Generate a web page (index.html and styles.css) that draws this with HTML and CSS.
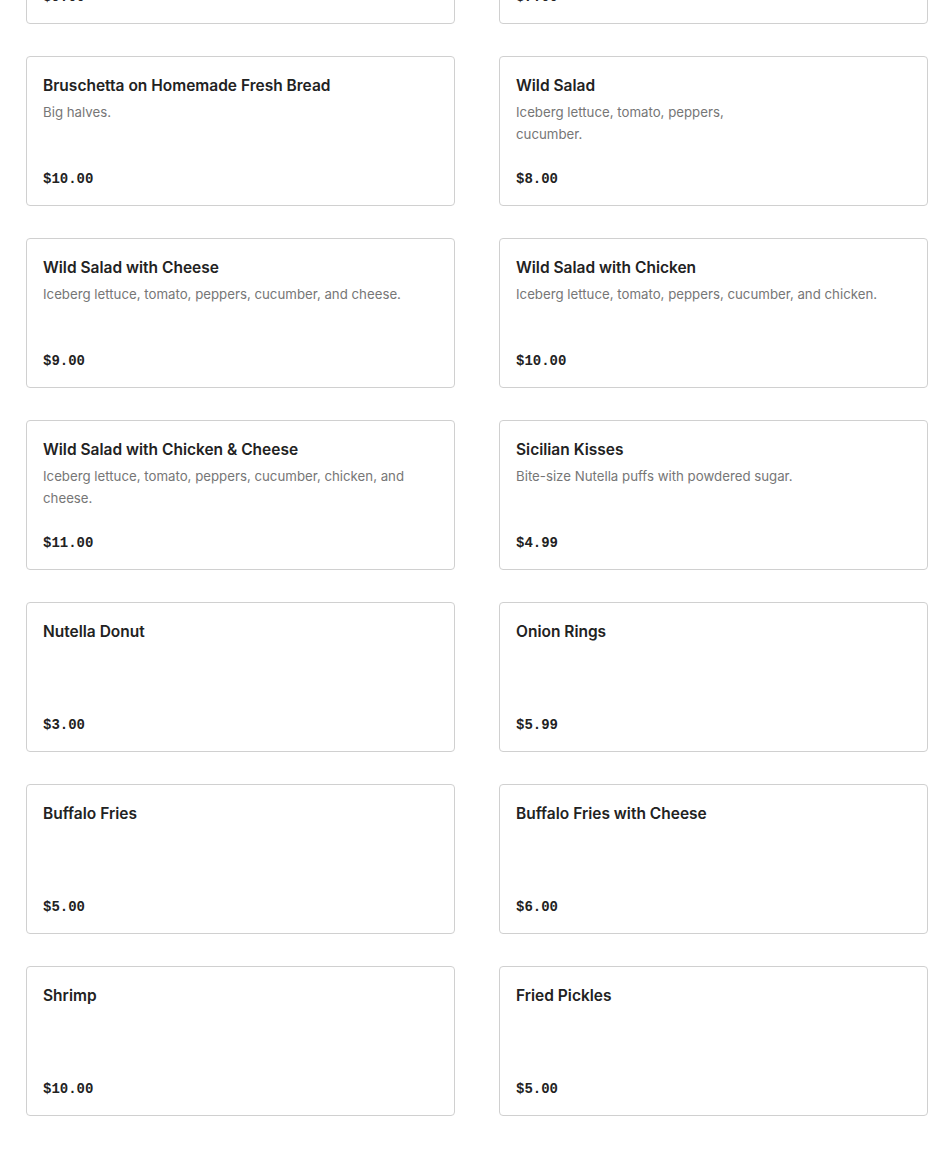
FILE: index.html
```html
<!DOCTYPE html>
<html lang="en">
<head>
    <meta charset="UTF-8">
    <title>Menu</title>
    <link rel="stylesheet" href="styles.css">
</head>
<body>
    <div class="menu-grid">
        <div class="menu-item">
            <h3 class="item-name">Garlic Bread</h3>
            <p class="item-desc">Fresh baked with garlic butter.</p>
            <span class="item-price">$9.00</span>
        </div>
        <div class="menu-item">
            <h3 class="item-name">House Salad</h3>
            <p class="item-desc">Mixed greens.</p>
            <span class="item-price">$7.00</span>
        </div>

        <div class="menu-item">
            <h3 class="item-name">Bruschetta on Homemade Fresh Bread</h3>
            <p class="item-desc">Big halves.</p>
            <span class="item-price">$10.00</span>
        </div>
        <div class="menu-item">
            <h3 class="item-name">Wild Salad</h3>
            <p class="item-desc">Iceberg lettuce, tomato, peppers,<br>cucumber.</p>
            <span class="item-price">$8.00</span>
        </div>

        <div class="menu-item">
            <h3 class="item-name">Wild Salad with Cheese</h3>
            <p class="item-desc">Iceberg lettuce, tomato, peppers, cucumber, and cheese.</p>
            <span class="item-price">$9.00</span>
        </div>
        <div class="menu-item">
            <h3 class="item-name">Wild Salad with Chicken</h3>
            <p class="item-desc">Iceberg lettuce, tomato, peppers, cucumber, and chicken.</p>
            <span class="item-price">$10.00</span>
        </div>

        <div class="menu-item">
            <h3 class="item-name">Wild Salad with Chicken &amp; Cheese</h3>
            <p class="item-desc">Iceberg lettuce, tomato, peppers, cucumber, chicken, and cheese.</p>
            <span class="item-price">$11.00</span>
        </div>
        <div class="menu-item">
            <h3 class="item-name">Sicilian Kisses</h3>
            <p class="item-desc">Bite-size Nutella puffs with powdered sugar.</p>
            <span class="item-price">$4.99</span>
        </div>

        <div class="menu-item">
            <h3 class="item-name">Nutella Donut</h3>
            <span class="item-price">$3.00</span>
        </div>
        <div class="menu-item">
            <h3 class="item-name">Onion Rings</h3>
            <span class="item-price">$5.99</span>
        </div>

        <div class="menu-item">
            <h3 class="item-name">Buffalo Fries</h3>
            <span class="item-price">$5.00</span>
        </div>
        <div class="menu-item">
            <h3 class="item-name">Buffalo Fries with Cheese</h3>
            <span class="item-price">$6.00</span>
        </div>

        <div class="menu-item">
            <h3 class="item-name">Shrimp</h3>
            <span class="item-price">$10.00</span>
        </div>
        <div class="menu-item">
            <h3 class="item-name">Fried Pickles</h3>
            <span class="item-price">$5.00</span>
        </div>
    </div>
</body>
</html>
```

FILE: styles.css
```css
body {
    margin: 0;
    background: #fff;
    font-family: "Inter", "Liberation Sans", sans-serif;
    color: #252525;
}

/* the list is scrolled: first row is cut off at the top */
.menu-grid {
    display: grid;
    grid-template-columns: 429px 429px;
    column-gap: 44px;
    row-gap: 32px;
    padding: 0 22px 0 26px;
    margin-top: -126px;
}

.menu-item {
    height: 150px;
    box-sizing: border-box;
    border: 1px solid #d0d0d0;
    border-radius: 4px;
    padding: 16px;
    display: flex;
    flex-direction: column;
}

.item-name {
    margin: 0;
    font-size: 15.5px;
    font-weight: 600;
    line-height: 25px;
    color: #222;
}

.item-desc {
    margin: 3px 0 0;
    font-size: 13.25px;
    line-height: 22px;
    color: #767676;
}

.item-price {
    margin-top: auto;
    font-family: "Liberation Mono", monospace;
    font-size: 14px;
    font-weight: bold;
    line-height: 20px;
    color: #222;
}
```
